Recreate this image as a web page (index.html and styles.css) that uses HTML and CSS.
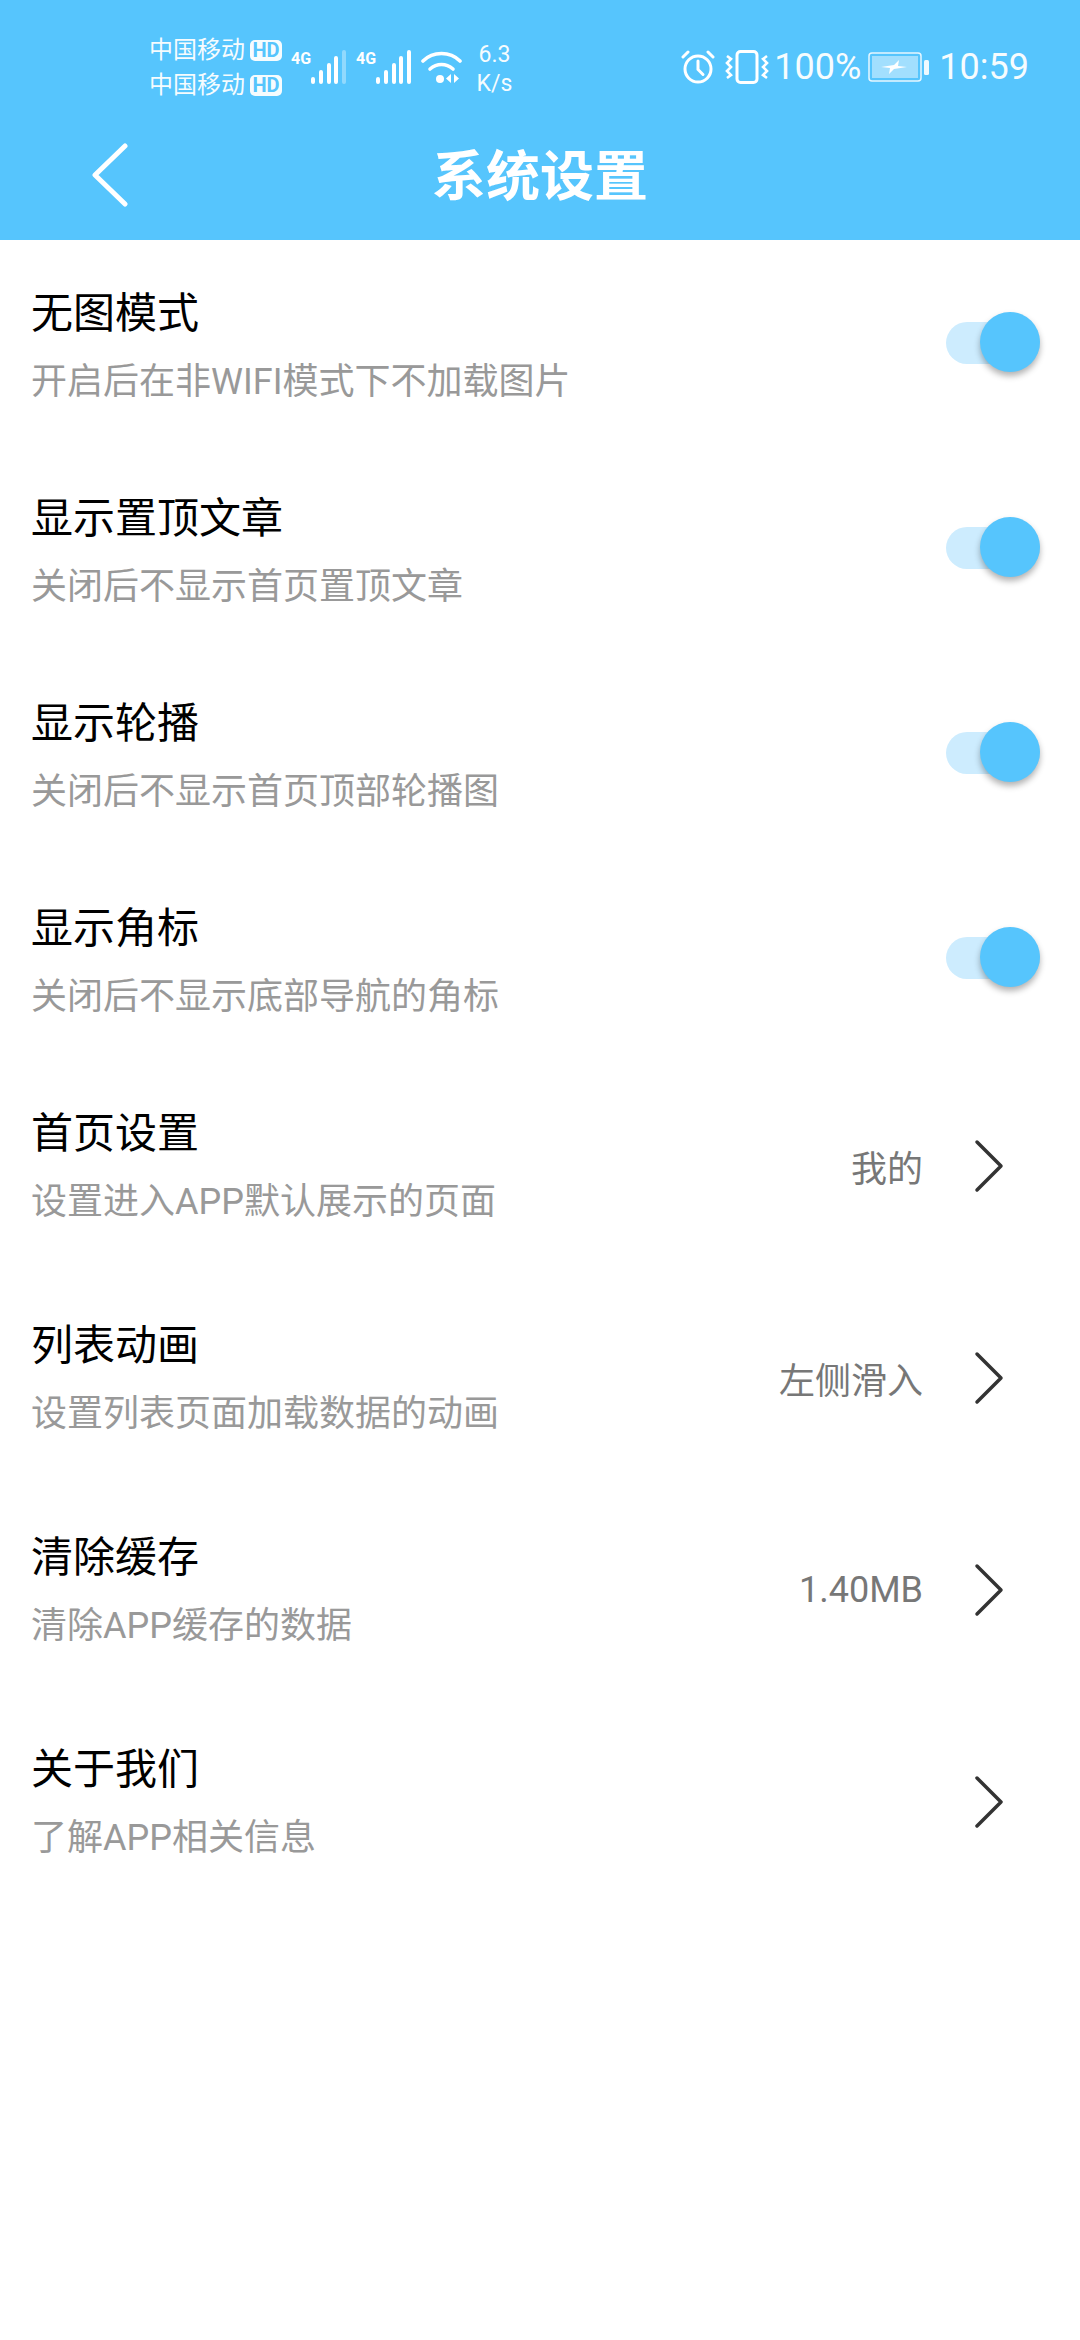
FILE: index.html
```html
<!DOCTYPE html>
<html lang="zh-CN">
<head>
<meta charset="UTF-8">
<meta name="viewport" content="width=device-width, initial-scale=1.0">
<title>系统设置</title>
<link rel="stylesheet" href="styles.css">
</head>
<body>

<div class="header">
    <div class="status">
        <div class="status-left">
            <div class="carriers">
                <div class="carrier">中国移动<span class="hd">HD</span></div>
                <div class="carrier">中国移动<span class="hd">HD</span></div>
            </div>
            <div class="signal">
                <span class="net">4G</span>
                <svg width="36" height="34" viewBox="0 0 36 34"><g stroke="#fff" stroke-width="4" stroke-linecap="round"><path d="M2 29v3M10 22v10M18 15v17M25 8v24"/><path d="M33 2v30" opacity=".35"/></g></svg>
            </div>
            <div class="signal">
                <span class="net">4G</span>
                <svg width="36" height="34" viewBox="0 0 36 34"><g stroke="#fff" stroke-width="4" stroke-linecap="round"><path d="M2 29v3M10 22v10M18 15v17M25 8v24M33 2v30"/></g></svg>
            </div>
            <svg class="wifi" width="42" height="36" viewBox="0 0 42 36"><g fill="none" stroke="#fff" stroke-width="3.6" stroke-linecap="round"><path d="M2 12C12 2 29 2 39 12"/><path d="M9 20c7-6 16-6 23 0"/></g><circle cx="19" cy="30" r="4" fill="#fff"/><path d="M30 25v9l-5-4.500zM33 25v9l5-4.500z" fill="#fff"/></svg>
            <div class="speed">6.3<br>K/s</div>
        </div>
        <div class="status-right">
            <svg width="34" height="34" viewBox="0 0 34 34"><g fill="none" stroke="#fff" stroke-width="3" stroke-linecap="round"><circle cx="17" cy="19" r="13"/><path d="M17 11v8.500l5 5"/><path d="M2 7l5-5M32 7l-5-5"/></g></svg>
            <svg class="vibrate" width="44" height="34" viewBox="0 0 44 34"><rect x="12" y="1.500" width="20" height="31" rx="3.500" fill="none" stroke="#fff" stroke-width="3"/><g fill="none" stroke="#fff" stroke-width="2.600"><path d="M2 6l4 3-4 4 4 4-4 4 4 4-4 3"/><path d="M42 6l-4 3 4 4-4 4 4 4-4 4 4 3"/></g></svg>
            <span class="pct">100%</span>
            <svg class="battery" width="62" height="30" viewBox="0 0 62 30"><rect x="1" y="1" width="52" height="28" rx="3" fill="none" stroke="#fff" stroke-width="1.500" opacity=".85"/><rect x="4" y="4" width="46" height="22" fill="#fff" opacity=".45"/><path d="M13 15l13-2 5-5-1 6 9 1-13 2-5 5 1-6z" fill="#fff"/><rect x="56" y="8" width="5" height="15" rx="1.500" fill="#fff" opacity=".9"/></svg>
            <span class="clock">10:59</span>
        </div>
    </div>
    <div class="navbar">
        <svg class="back" width="38" height="64" viewBox="0 0 38 64"><path d="M34 3L4 32l30 29" fill="none" stroke="#fff" stroke-width="5" stroke-linecap="round" stroke-linejoin="round"/></svg>
        <h1>系统设置</h1>
    </div>
</div>

<div class="list">
    <div class="row">
        <div class="label"><div class="name">无图模式</div><div class="desc">开启后在非WIFI模式下不加载图片</div></div>
        <div class="toggle"><span class="knob"></span></div>
    </div>
    <div class="row">
        <div class="label"><div class="name">显示置顶文章</div><div class="desc">关闭后不显示首页置顶文章</div></div>
        <div class="toggle"><span class="knob"></span></div>
    </div>
    <div class="row">
        <div class="label"><div class="name">显示轮播</div><div class="desc">关闭后不显示首页顶部轮播图</div></div>
        <div class="toggle"><span class="knob"></span></div>
    </div>
    <div class="row">
        <div class="label"><div class="name">显示角标</div><div class="desc">关闭后不显示底部导航的角标</div></div>
        <div class="toggle"><span class="knob"></span></div>
    </div>
    <div class="row link">
        <div class="label"><div class="name">首页设置</div><div class="desc">设置进入APP默认展示的页面</div></div>
        <div class="value">我的</div>
        <svg class="arrow" width="30" height="54" viewBox="0 0 30 54"><path d="M3 3l24 24L3 51" fill="none" stroke="#333" stroke-width="3.500" stroke-linecap="round" stroke-linejoin="round"/></svg>
    </div>
    <div class="row link">
        <div class="label"><div class="name">列表动画</div><div class="desc">设置列表页面加载数据的动画</div></div>
        <div class="value">左侧滑入</div>
        <svg class="arrow" width="30" height="54" viewBox="0 0 30 54"><path d="M3 3l24 24L3 51" fill="none" stroke="#333" stroke-width="3.500" stroke-linecap="round" stroke-linejoin="round"/></svg>
    </div>
    <div class="row link">
        <div class="label"><div class="name">清除缓存</div><div class="desc">清除APP缓存的数据</div></div>
        <div class="value">1.40MB</div>
        <svg class="arrow" width="30" height="54" viewBox="0 0 30 54"><path d="M3 3l24 24L3 51" fill="none" stroke="#333" stroke-width="3.500" stroke-linecap="round" stroke-linejoin="round"/></svg>
    </div>
    <div class="row link">
        <div class="label"><div class="name">关于我们</div><div class="desc">了解APP相关信息</div></div>
        <svg class="arrow" width="30" height="54" viewBox="0 0 30 54"><path d="M3 3l24 24L3 51" fill="none" stroke="#333" stroke-width="3.500" stroke-linecap="round" stroke-linejoin="round"/></svg>
    </div>
</div>

</body>
</html>
```

FILE: styles.css
```css
body {
    font-family: Roboto, "Noto Sans CJK SC", sans-serif;
    background-color: #fff;
    margin: 0;
}

.header {
    background-color: #56c5fd;
    height: 240px;
    color: #fff;
}

.status {
    display: flex;
    justify-content: space-between;
    align-items: center;
    box-sizing: border-box;
    height: 110px;
    padding: 24px 51px 0 149px;
}

.status-left {
    display: flex;
    align-items: center;
}

.status-right {
    display: flex;
    align-items: center;
}

.carriers {
    font-size: 24px;
    line-height: 35px;
    margin-top: 2px;
    opacity: 0.95;
}

.carrier {
    display: flex;
    align-items: center;
}

.hd {
    background-color: #fff;
    color: #56c5fd;
    font-size: 20px;
    font-weight: bold;
    line-height: 21px;
    width: 32px;
    height: 21px;
    text-align: center;
    border-radius: 5px;
    margin-left: 5px;
}

.signal {
    display: flex;
    align-items: flex-start;
    margin-left: 9px;
}

.signal + .signal {
    margin-left: 9px;
}

.net {
    font-size: 16px;
    font-weight: bold;
    line-height: 18px;
    width: 20px;
}

.wifi {
    margin-left: 9px;
}

.speed {
    font-size: 23px;
    line-height: 29px;
    text-align: center;
    margin: 3px 0 0 13px;
    width: 37px;
    opacity: 0.95;
}

.vibrate {
    margin-left: 10px;
}

.pct,
.clock {
    font-size: 36px;
    line-height: 40px;
    opacity: 0.95;
}

.pct {
    margin-left: 5px;
}

.battery {
    margin-left: 7px;
}

.clock {
    margin-left: 9px;
}

.navbar {
    display: flex;
    align-items: center;
    justify-content: center;
    position: relative;
    height: 130px;
}

.navbar h1 {
    font-size: 54px;
    font-weight: bold;
    margin: 0 0 6px;
}

.back {
    position: absolute;
    left: 91px;
    top: 33px;
}

.row {
    display: flex;
    align-items: center;
    box-sizing: border-box;
    height: 205px;
    padding: 0 40px 0 31px;
}

.row.link {
    height: 212px;
    padding-right: 76px;
}

.label {
    flex: 1;
    padding-top: 6px;
}

.link .label {
    padding-top: 0;
}

.name {
    font-size: 42px;
    line-height: 56px;
    color: #000;
}

.desc {
    font-size: 36px;
    line-height: 48px;
    margin-top: 16px;
    color: #999;
}

.value {
    font-size: 36px;
    color: #777;
    margin-right: 51px;
}

.toggle {
    position: relative;
    width: 94px;
    height: 42px;
    border-radius: 21px;
    background-color: #cdecfe;
}

.knob {
    position: absolute;
    right: 0;
    top: -10px;
    width: 60px;
    height: 60px;
    border-radius: 50%;
    background-color: #56c5fd;
    box-shadow: 0 4px 6px rgba(0, 0, 0, 0.3);
}
```
